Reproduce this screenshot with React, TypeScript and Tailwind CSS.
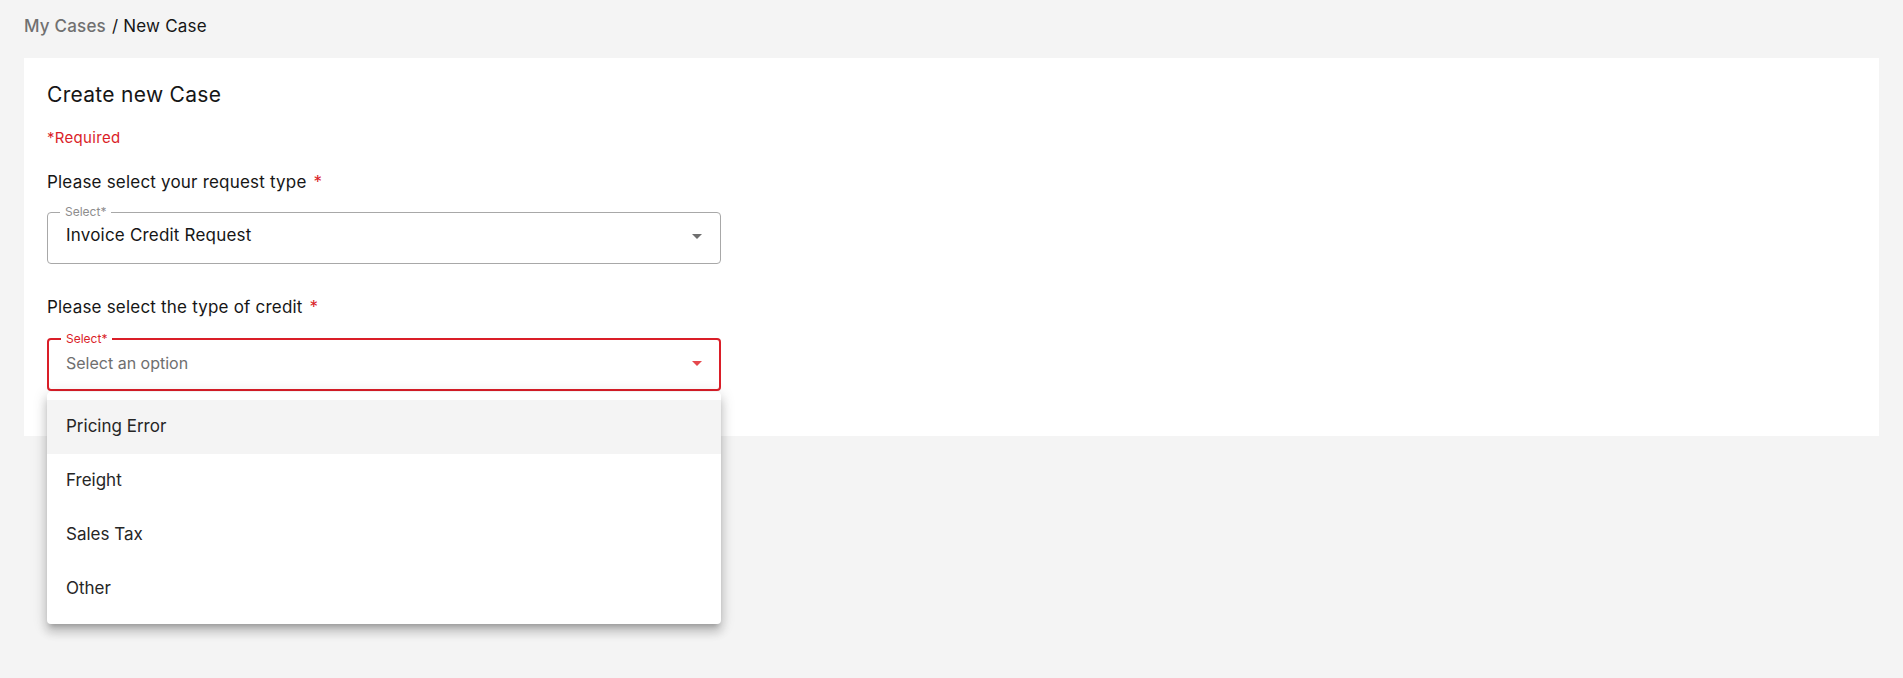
import { useState } from 'react'

const options = ['Pricing Error', 'Freight', 'Sales Tax', 'Other']

function Caret({ color }: { color: string }) {
  return (
    <svg width="10" height="5" viewBox="0 0 10 5" className="shrink-0">
      <path d="M0 0 L10 0 L5 5 Z" fill={color} />
    </svg>
  )
}

export default function App() {
  const [hovered] = useState(0)

  return (
    <div className="min-h-screen bg-[#f4f4f4] px-6 font-['Inter','Liberation_Sans',sans-serif] text-[#161616]">
      {/* breadcrumb */}
      <div className="pt-[14px] text-[17px] leading-6 tracking-[0.2px]">
        <span className="font-medium text-[#707070]">My Cases</span>
        <span className="ml-[6px]">/ New Case</span>
      </div>

      <div className="mt-5 bg-white px-[23px] pt-[23px] pb-[45px]">
        <h1 className="text-[21px] leading-7 font-normal tracking-[0.3px]">Create new Case</h1>
        <div className="mt-[19px] text-[15px] leading-5 tracking-[0.3px] text-[#da1e28]">*Required</div>

        <div className="mt-[22px] text-[17px] leading-6 tracking-[0.2px]">
          Please select your request type <span className="ml-[2px] text-[#da1e28]">*</span>
        </div>
        <fieldset className="mt-3 w-[674px] rounded-[4px] border border-[#a8a8a8] px-[18px] pb-[15px]">
          <legend className="ml-[-6px] px-[5px] text-[12px] leading-3 text-[#8d8d8d]">Select*</legend>
          <div className="mt-[6px] flex h-6 items-center justify-between">
            <span className="text-[17px] tracking-[0.2px]">Invoice Credit Request</span>
            <Caret color="#6f6f6f" />
          </div>
        </fieldset>

        <div className="mt-[31px] text-[17px] leading-6 tracking-[0.2px]">
          Please select the type of credit <span className="ml-[2px] text-[#da1e28]">*</span>
        </div>
        <div className="relative mt-[14px] w-[674px]">
          <fieldset className="rounded-[4px] border-2 border-[#da1e28] px-[17px] pb-[14px]">
            <legend className="ml-[-5px] px-[5px] text-[12px] leading-3 text-[#da1e28]">Select*</legend>
            <div className="mt-[6px] flex h-6 items-center justify-between">
              <span className="text-[16px] text-[#6f6f6f]">Select an option</span>
              <Caret color="#e5484d" />
            </div>
          </fieldset>

          {/* open menu */}
          <ul className="absolute left-0 right-0 top-full z-10 mt-[1px] rounded-[4px] bg-white py-2 shadow-[0_5px_5px_-3px_rgba(0,0,0,0.2),0_8px_10px_1px_rgba(0,0,0,0.14),0_3px_14px_2px_rgba(0,0,0,0.12)]">
            {options.map((o, i) => (
              <li
                key={o}
                className={`flex h-[54px] items-center px-[19px] text-[17px] text-[#262626] ${i === hovered ? 'bg-[#f4f4f4]' : ''}`}
              >
                {o}
              </li>
            ))}
          </ul>
        </div>
      </div>
    </div>
  )
}
